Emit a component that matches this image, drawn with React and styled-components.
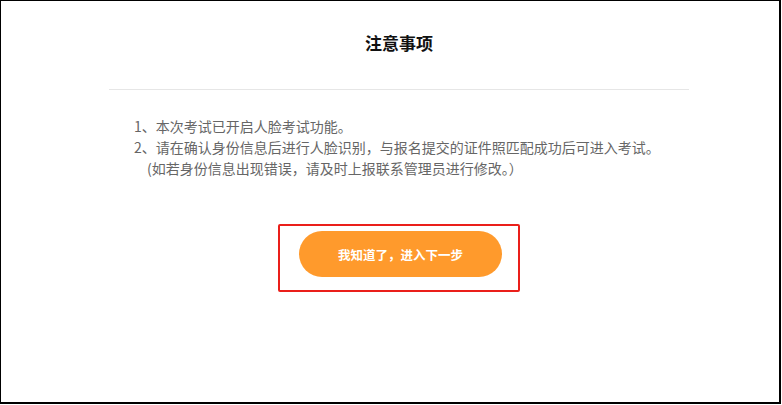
import React from "react";
import styled, { createGlobalStyle } from "styled-components";

const GlobalStyle = createGlobalStyle`
  html, body {
    margin: 0;
    padding: 0;
    background: #fff;
  }
  body {
    font-family: "Noto Sans CJK SC", "Noto Sans", "Liberation Sans", sans-serif;
  }
`;

const Frame = styled.div`
  box-sizing: border-box;
  width: 781px;
  height: 404px;
  border: 1px solid #000;
  border-right-width: 2px;
  border-bottom-width: 2px;
  background: #fff;
  display: flex;
  justify-content: center;
  padding-left: 18px;
`;

const Notice = styled.div`
  width: 580px;
  display: flex;
  flex-direction: column;
  align-items: center;
`;

const Title = styled.h2`
  margin: 30px 0 0;
  font-size: 17px;
  line-height: 24px;
  font-weight: 700;
  color: #111;
`;

const Divider = styled.div`
  align-self: stretch;
  height: 1px;
  background: #e6e6e6;
  margin-top: 34px;
`;

const Rules = styled.ol`
  list-style: none;
  align-self: stretch;
  margin: 26px 0 0;
  padding: 0 0 0 25px;
  font-size: 14px;
  line-height: 21px;
  color: #666;
`;

const Rule = styled.li`
  padding-left: ${(p) => (p.indent ? "13px" : "0")};
  white-space: nowrap;
`;

const Highlight = styled.div`
  margin-top: 45px;
  border: 2px solid #ea1f1a;
  border-radius: 2px;
  padding: 5px 16px 13px 19px;
`;

const NextButton = styled.button`
  display: block;
  width: 203px;
  height: 46px;
  border: none;
  border-radius: 23px;
  background: #ff9a2c;
  color: #fff;
  font-family: inherit;
  font-size: 12.5px;
  font-weight: 700;
  cursor: pointer;
`;

const rules = [
  { text: "1、本次考试已开启人脸考试功能。" },
  { text: "2、请在确认身份信息后进行人脸识别，与报名提交的证件照匹配成功后可进入考试。" },
  { text: "(如若身份信息出现错误，请及时上报联系管理员进行修改。）", indent: true },
];

export default function App() {
  return (
    <>
      <GlobalStyle />
      <Frame>
        <Notice>
          <Title>注意事项</Title>
          <Divider />
          <Rules>
            {rules.map((r, i) => (
              <Rule key={i} indent={r.indent}>
                {r.text}
              </Rule>
            ))}
          </Rules>
          <Highlight>
            <NextButton>我知道了，进入下一步</NextButton>
          </Highlight>
        </Notice>
      </Frame>
    </>
  );
}
